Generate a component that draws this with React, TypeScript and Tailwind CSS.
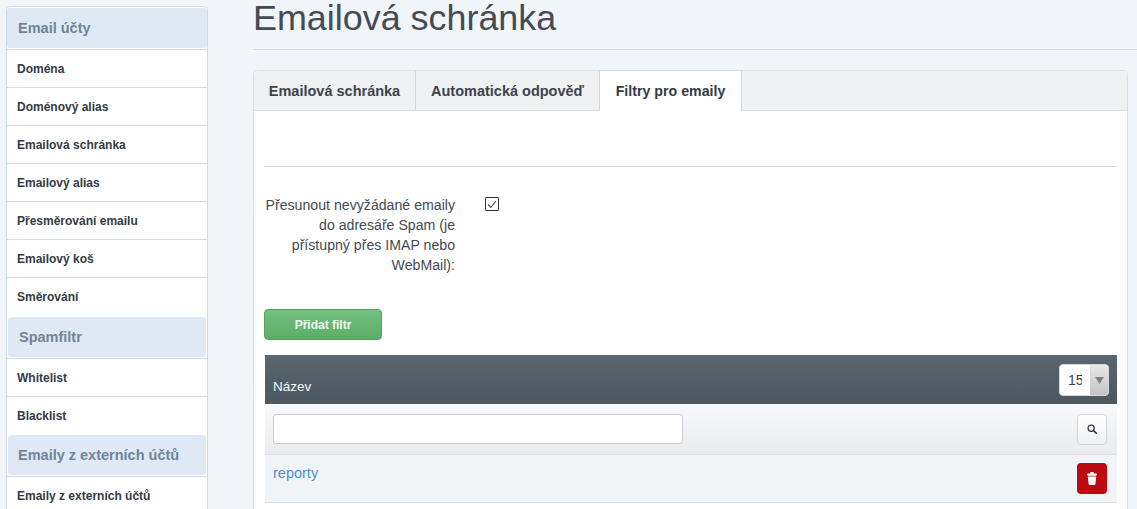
import React from 'react';

const font = { fontFamily: '"Liberation Sans", Arial, sans-serif' };

const Heading = ({ label, wrap, inner }: { label: string; wrap: string; inner: string }) => (
  <div className={`border-b border-[#cfdbe8] ${wrap}`}>
    <div className={`h-[40px] bg-[#dfe9f5] rounded-[3px] flex items-center pt-px text-[14.5px] font-bold text-[#708498] ${inner}`}>
      {label}
    </div>
  </div>
);

const Item = ({ label, last }: { label: string; last?: boolean }) => (
  <div className={`h-[38px] flex items-center pl-[10px] text-[12px] font-bold text-[#333b45] bg-white ${last ? '' : 'border-b border-[#cfdbe8]'}`}>
    {label}
  </div>
);

const Sidebar = () => (
  <div className="w-[202px] ml-[6px] mt-[6px] h-[520px] shrink-0 border border-[#cfdbe8] rounded-t-[4px] bg-white overflow-hidden">
    <Heading label="Email účty" wrap="h-[43px] pt-px" inner="pl-[11px]" />
    <Item label="Doména" />
    <Item label="Doménový alias" />
    <Item label="Emailová schránka" />
    <Item label="Emailový alias" />
    <Item label="Přesměrování emailu" />
    <Item label="Emailový koš" />
    <Item label="Směrování" last />
    <Heading label="Spamfiltr" wrap="h-[43px] pt-px px-px" inner="pl-[11px]" />
    <Item label="Whitelist" />
    <Item label="Blacklist" last />
    <Heading label="Emaily z externích účtů" wrap="h-[42px] px-px" inner="pl-[10px]" />
    <Item label="Emaily z externích účtů" last />
  </div>
);

const Tabs = () => (
  <div className="h-[40px] bg-[#f0f1f3] border-b border-[#dcdfe3] flex text-[14.5px] font-bold text-[#3d434c] rounded-t-[5px]">
    <div className="w-[162px] h-[40px] flex items-center justify-center pt-[2px] border-r border-[#d5d8dc]">
      Emailová schránka
    </div>
    <div className="w-[184px] h-[40px] flex items-center justify-center pt-[2px] border-r border-[#d5d8dc]">
      Automatická odpověď
    </div>
    <div className="w-[142px] h-[40px] flex items-center justify-center pt-[2px] bg-white border-r border-[#d5d8dc] text-[14.2px] text-[#333b45]">
      Filtry pro emaily
    </div>
  </div>
);

const FilterTable = () => (
  <div className="mt-[15px] ml-px">
    <div className="h-[49px] bg-gradient-to-b from-[#5a6770] to-[#4c5760] flex items-start justify-between px-[8px]">
      <span className="mt-[22px] text-[13.5px] text-[#f4f6f8]">Název</span>
      <div className="mt-[9px] w-[50px] h-[32px] flex rounded-[4px] overflow-hidden bg-white border border-[#d5d7da]">
        <div className="w-[30px] pl-[8px] flex items-center text-[14px] text-[#444]">
          <span className="block w-[14px] overflow-hidden">15</span>
        </div>
        <div className="flex-1 bg-gradient-to-b from-[#e8e8e8] to-[#c4c4c4] flex items-center justify-center">
          <svg width="9" height="7" viewBox="0 0 9 7"><path d="M0 0h9L4.5 7z" fill="#7f8286" /></svg>
        </div>
      </div>
    </div>
    <div className="h-[51px] bg-gradient-to-b from-[#f8f9fa] to-[#e9ebee] border-b border-[#dcdfe3] flex items-center justify-between pl-[8px] pr-[10px]">
      <div className="w-[410px] h-[30px] bg-white border border-[#c8cbcf] rounded-[3px]" />
      <button className="w-[30px] h-[31px] bg-gradient-to-b from-white to-[#f0f1f3] border border-[#d0d3d7] rounded-[4px] flex items-center justify-center">
        <svg width="10" height="10" viewBox="0 0 12 12" fill="none" stroke="#2f3a45" strokeWidth="1.5">
          <circle cx="5" cy="5" r="3.7" />
          <path d="M7.8 7.8 11 11" strokeLinecap="round" strokeWidth="2" />
        </svg>
      </button>
    </div>
    <div className="h-[48px] bg-[#f1f4f7] border-b border-[#dcdfe3] flex items-start justify-between pl-[8px] pr-[10px]">
      <a className="mt-[8px] text-[14.5px] text-[#4a90d2]">reporty</a>
      <button className="mt-[8px] w-[30px] h-[31px] bg-[#bd0a12] rounded-[4px] flex items-center justify-center">
        <svg width="10" height="13" viewBox="0 0 10 13" fill="#fff">
          <rect x="0" y="1.5" width="10" height="2.2" rx="1.1" />
          <rect x="3" y="0" width="4" height="2" rx="1" />
          <path d="M.8 4.4h8.4l-.8 7.7a1 1 0 0 1-1 .9H2.6a1 1 0 0 1-1-.9z" />
        </svg>
      </button>
    </div>
  </div>
);

export default function App() {
  return (
    <div className="w-[1137px] h-[509px] overflow-hidden bg-[#f1f4f8] flex" style={font}>
      <Sidebar />
      <main className="ml-[45px] flex-1 min-w-0">
        <div className="h-[50px] border-b border-[#d5d8dc]">
          <h1 className="text-[35.9px] leading-[36px] text-[#444b54]">Emailová schránka</h1>
        </div>
        <div className="mt-[20px] w-[875px] h-[460px] bg-white border border-[#dcdfe3] rounded-t-[5px]">
          <Tabs />
          <div className="px-[10px]">
            <div className="h-[56px] border-b border-[#d5d8dc]" />
            <div className="mt-[28px] flex items-start">
              <label className="w-[191px] text-right text-[14.15px] leading-[20px] text-[#444b54]">
                Přesunout nevyžádané emaily do adresáře Spam (je přístupný přes IMAP nebo WebMail):
              </label>
              <div className="ml-[30px] mt-[2px] w-[14px] h-[14px] border border-[#333] rounded-[1px] flex items-center justify-center bg-white">
                <svg width="10" height="9" viewBox="0 0 10 9" fill="none" stroke="#444" strokeWidth="1.1"><path d="M1 4.5 3.8 7.5 9 1" /></svg>
              </div>
            </div>
            <button className="mt-[34px] block w-[118px] h-[31px] rounded-[4px] bg-gradient-to-b from-[#75c07e] to-[#5bad66] border border-[#55a560] text-[12px] font-bold text-[#f1faf2]">
              Přidat filtr
            </button>
            <FilterTable />
          </div>
        </div>
      </main>
    </div>
  );
}
